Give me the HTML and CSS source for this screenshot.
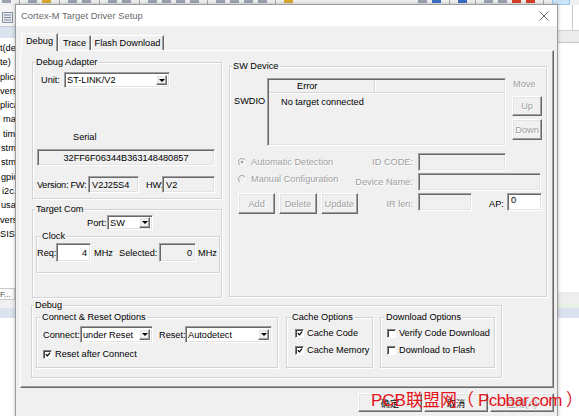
FILE: index.html
```html
<!DOCTYPE html>
<html>
<head>
<meta charset="utf-8">
<title>Cortex-M Target Driver Setup</title>
<link rel="stylesheet" href="styles.css">
</head>
<body>
<div class="ide">
  <div class="toolbar">
    <span class="tb-ic"></span><span class="tb-sep"></span>
    <span class="tb-ic"></span><span class="tb-ic yel"></span><span class="tb-sep"></span>
    <span class="tb-ic"></span><span class="tb-ic"></span><span class="tb-sep"></span>
    <span class="tb-ic"></span><span class="tb-ic"></span><span class="tb-sep"></span>
    <span class="tb-ic"></span><span class="tb-ic"></span><span class="tb-ic"></span><span class="tb-ic"></span><span class="tb-sep"></span>
    <span class="tb-ic"></span><span class="tb-ic"></span><span class="tb-ic"></span><span class="tb-ic"></span><span class="tb-sep"></span>
    <span class="tb-ic yel"></span>
    <span class="tb-fill"></span>
    <span class="tb-ic"></span><span class="tb-ic blu"></span><span class="tb-sep"></span>
    <span class="tb-ic blu"></span><span class="tb-sep"></span>
    <span class="tb-ic"></span><span class="tb-ic"></span><span class="tb-ic red"></span><span class="tb-ic red"></span><span class="tb-sep"></span>
    <span class="tb-hl"></span>
  </div>
  <div class="ide-main">
    <div class="left-pane">
      <div class="lp-tool">
        <svg class="lp-icon" width="11" height="11" viewBox="0 0 11 11"><rect x="0.5" y="0.5" width="10" height="10" fill="#e8eaf0" stroke="#8a93a6"/><path d="M2 3h7M2 5.5h7M2 8h7" stroke="#7b86a0"/></svg>
      </div>
      <div class="lp-head"></div>
      <div class="tree">
        <div class="tl">t(debug)</div>
        <div class="tl">te)</div>
        <div class="tl">plication</div>
        <div class="tl">vers/</div>
        <div class="tl">plication</div>
        <div class="tl in">main.c</div>
        <div class="tl in">timer.c</div>
        <div class="tl in1">stm32f10x</div>
        <div class="tl in1">stm32f10x</div>
        <div class="tl in1">gpio.c</div>
        <div class="tl in2">i2c.c</div>
        <div class="tl in1">usart.c</div>
        <div class="tl">vers/</div>
        <div class="tl">SIS</div>
      </div>
      <div class="lp-tab">F...</div>
      <div class="lp-gap"></div>
      <div class="lp-head2"></div>
      <div class="lp-rest"></div>
    </div>
    <div class="right-pane">
      <div class="rp-top"><span class="rp-line"></span></div>
      <div class="rp-band"></div>
      <div class="rp-white"></div>
      <div class="rp-gray"></div>
      <div class="rp-green"></div>
      <div class="rp-blue"></div>
      <div class="rp-rest"></div>
    </div>
  </div>
</div>

<div class="dialog">
  <div class="titlebar">
    <span class="title">Cortex-M Target Driver Setup</span>
    <svg class="close" width="10" height="10" viewBox="0 0 10 10"><path d="M0.5 0.5L9.5 9.5M9.5 0.5L0.5 9.5" stroke="#6e6e6e" stroke-width="1"/></svg>
  </div>
  <div class="dbody">
    <div class="tabs">
      <div class="tab sel">Debug</div>
      <div class="tab">Trace</div>
      <div class="tab">Flash Download</div>
    </div>
    <div class="panel">
      <div class="cols">
        <div class="lcol">
          <div class="group g-adapter">
            <div class="gt">Debug Adapter</div>
            <div class="unit-row">
              <span class="lbl unit-lbl">Unit:</span>
              <div class="combo sunken unit-combo"><span class="ctext">ST-LINK/V2</span><span class="drop raised"><i class="tri"></i></span></div>
            </div>
            <div class="serial-lbl">Serial</div>
            <div class="field sunken serial">32FF6F06344B363148480857</div>
            <div class="ver-row">
              <span class="lbl ver-lbl">Version: FW:</span>
              <div class="field sunken fw">V2J25S4</div>
              <span class="lbl hw-lbl">HW:</span>
              <div class="field sunken hw">V2</div>
            </div>
          </div>
          <div class="group g-target">
            <div class="gt">Target Com</div>
            <div class="port-row">
              <span class="lbl port-lbl">Port:</span>
              <div class="combo sunken port-combo"><span class="ctext">SW</span><span class="drop raised"><i class="tri"></i></span></div>
            </div>
            <div class="group g-clock">
              <div class="gt gt-in">Clock</div>
              <div class="req-row">
                <span class="lbl req-lbl">Req:</span>
                <div class="field sunken white req">4</div>
                <span class="lbl mhz1">MHz</span>
                <span class="lbl sel-lbl">Selected:</span>
                <div class="field sunken selbox">0</div>
                <span class="lbl mhz2">MHz</span>
              </div>
            </div>
          </div>
        </div>
        <div class="group g-sw">
          <div class="gt">SW Device</div>
          <div class="sw-top">
            <span class="lbl swdio">SWDIO</span>
            <div class="table sunken">
              <div class="thead">
                <div class="th1">Error</div>
                <div class="th2"></div>
              </div>
              <div class="trow">No target connected</div>
            </div>
            <div class="move">
              <span class="dis move-lbl">Move</span>
              <div class="btn raised dis up">Up</div>
              <div class="btn raised dis down">Down</div>
            </div>
          </div>
          <div class="sw-grid">
            <div class="radio dis r1"><svg width="8" height="8" viewBox="0 0 8 8"><path d="M7 2.2A3.5 3.5 0 1 0 2.2 7" fill="none" stroke="#a0a0a0"/><path d="M7 2.2A3.5 3.5 0 0 1 2.2 7" fill="none" stroke="#fff"/><circle cx="4" cy="4" r="1.2" fill="#a0a0a0"/></svg><span>Automatic Detection</span></div>
            <span class="lbl dis glbl">ID CODE:</span>
            <div class="field sunken idcode"></div>

            <div class="radio dis r2"><svg width="8" height="8" viewBox="0 0 8 8"><path d="M7 2.2A3.5 3.5 0 1 0 2.2 7" fill="none" stroke="#a0a0a0"/><path d="M7 2.2A3.5 3.5 0 0 1 2.2 7" fill="none" stroke="#fff"/></svg><span>Manual Configuration</span></div>
            <span class="lbl dis glbl">Device Name:</span>
            <div class="field sunken devname"></div>

            <div class="btnrow">
              <div class="btn raised dis b-add">Add</div>
              <div class="btn raised dis b-del">Delete</div>
              <div class="btn raised dis b-upd">Update</div>
            </div>
            <span class="lbl dis glbl">IR len:</span>
            <div class="ir-cell">
              <div class="field sunken irlen"></div>
              <span class="lbl ap-lbl">AP:</span>
              <div class="field sunken white ap">0</div>
            </div>
          </div>
        </div>
      </div>
      <div class="group g-debug">
        <div class="gt">Debug</div>
        <div class="dg-row">
          <div class="group g-conn">
            <div class="gt gt-in">Connect &amp; Reset Options</div>
            <div class="conn-row">
              <span class="lbl conn-lbl">Connect:</span>
              <div class="combo sunken conn-combo"><span class="ctext">under Reset</span><span class="drop raised"><i class="tri"></i></span></div>
              <span class="lbl reset-lbl">Reset:</span>
              <div class="combo sunken reset-combo"><span class="ctext">Autodetect</span><span class="drop raised"><i class="tri"></i></span></div>
            </div>
            <div class="check c-conn"><span class="cb"><svg width="7" height="7" viewBox="0 0 7 7"><path d="M1 3.2L2.8 5L6 1.4" fill="none" stroke="#000" stroke-width="1.4"/></svg></span><span>Reset after Connect</span></div>
          </div>
          <div class="group g-cache">
            <div class="gt gt-in">Cache Options</div>
            <div class="check c-c1"><span class="cb"><svg width="7" height="7" viewBox="0 0 7 7"><path d="M1 3.2L2.8 5L6 1.4" fill="none" stroke="#000" stroke-width="1.4"/></svg></span><span>Cache Code</span></div>
            <div class="check c-c2"><span class="cb"><svg width="7" height="7" viewBox="0 0 7 7"><path d="M1 3.2L2.8 5L6 1.4" fill="none" stroke="#000" stroke-width="1.4"/></svg></span><span>Cache Memory</span></div>
          </div>
          <div class="group g-dl">
            <div class="gt gt-in">Download Options</div>
            <div class="check c-d1"><span class="cb"></span><span>Verify Code Download</span></div>
            <div class="check c-d2"><span class="cb"></span><span>Download to Flash</span></div>
          </div>
        </div>
      </div>
    </div>
    <div class="buttons">
      <div class="btn raised dbtn">确定</div>
      <div class="btn raised dbtn">取消</div>
      <div class="btn raised dbtn dis">应用(A)</div>
    </div>
  </div>
</div>

<div class="watermark">PCB联盟网（<span class="wm-lat"> Pcbbar.com </span>）</div>
</body>
</html>
```

FILE: styles.css
```css
* { box-sizing: border-box; }
html, body { margin: 0; padding: 0; }
body {
  width: 579px;
  height: 416px;
  overflow: hidden;
  position: relative;
  background: #fff;
  font-family: "Liberation Sans", Arial, "Noto Sans CJK SC", sans-serif;
  font-size: 9.2px;
  color: #000;
}

/* ---------- background IDE ---------- */
.ide { display: flex; flex-direction: column; height: 416px; }
.toolbar {
  height: 5px;
  background: #f0f0f0;
  display: flex;
  align-items: flex-start;
  gap: 5px;
  padding-left: 2px;
  overflow: hidden;
}
.tb-ic { width: 9px; height: 3px; background: #9aa3b0; flex: none; margin-top: 0; }
.tb-ic.yel { background: #d9a830; }
.tb-ic.blu { background: #3d6fc4; }
.tb-ic.red { background: #d8402a; }
.tb-sep { width: 1px; height: 5px; background: #a8a8a8; flex: none; margin: 0 3px; }
.tb-fill { flex: 1; }
.tb-hl { width: 18px; height: 5px; background: #cce4f7; border: 1px solid #99c9ef; border-top: 0; flex: none; margin-right: 9px; }

.ide-main { flex: 1; display: flex; justify-content: space-between; }
.left-pane { width: 15px; display: flex; flex-direction: column; overflow: hidden; }
.lp-tool { height: 21px; background: #f5f5f5; padding: 7px 0 0 2px; }
.lp-icon { display: block; }
.lp-head { height: 12px; background: #dbe3ee; border-top: 1px solid #c5cdd8; }
.tree { height: 250px; background: #fff; padding-top: 3px; white-space: nowrap; }
.tl { height: 14.3px; line-height: 14px; }
.tl.in { padding-left: 3px; }
.tl.in1 { padding-left: 1px; }
.tl.in2 { padding-left: 2px; }
.lp-tab { height: 12px; line-height: 11px; background: #fafafa; border: 1px solid #c8c8c8; border-left: 0; color: #555; font-size: 8px; white-space: nowrap; overflow: hidden; }
.lp-gap { height: 8px; background: #f0f0f0; }
.lp-head2 { height: 10px; background: #dbe3ee; }
.lp-rest { flex: 1; background: #fff; }

.right-pane { width: 22px; display: flex; flex-direction: column; }
.rp-top { height: 25px; background: #fff; display: flex; justify-content: flex-end; padding-right: 6px; }
.rp-line { width: 1px; height: 25px; background: #c8c8c8; }
.rp-band { height: 13px; background: #ececec; border-top: 1px solid #d0d0d0; border-bottom: 1px solid #c4c4c4; }
.rp-white { height: 249px; background: #fff; }
.rp-gray { height: 11px; background: #eeeeee; }
.rp-green { height: 5px; background: #e9f1e4; }
.rp-blue { height: 10px; background: #dbe3ee; }
.rp-rest { flex: 1; background: #fff; }

/* ---------- dialog window ---------- */
.dialog {
  position: absolute;
  left: 15px;
  top: 4px;
  width: 543px;
  height: 420px;
  background: #f0f0f0;
  border: 1px solid #9c9c9c;
  box-shadow: 0 0 4px rgba(0, 0, 0, 0.25);
}
.titlebar {
  height: 21px;
  background: #fff;
  display: flex;
  align-items: center;
  justify-content: space-between;
  padding: 0 8px 0 5px;
}
.title { color: #6a6a6a; font-size: 9.4px; }
.close { display: block; }

.dbody { padding: 7px 3px 0 4px; }

.tabs { display: flex; align-items: flex-end; height: 17px; padding-left: 1px; position: relative; z-index: 1; }
.tab {
  height: 15px;
  line-height: 14px;
  padding: 0 4px;
  border: 1px solid;
  border-bottom: 0;
  border-color: #fff #696969 #696969 #fff;
  box-shadow: inset -1px 0 0 #a0a0a0;
  background: #f0f0f0;
}
.tab.sel { height: 18px; margin-bottom: -1px; line-height: 15px; width: 37px; text-align: center; padding: 0; }
.tab:nth-child(2) { width: 33px; text-align: center; padding: 0; }
.tab:nth-child(3) { width: 73px; text-align: center; padding: 0; }

.panel {
  width: 534px;
  height: 338px;
  border: 1px solid;
  border-color: #fff #696969 #696969 #fff;
  box-shadow: inset -1px -1px 0 #a0a0a0;
  padding: 0 0 0 11px;
}

.cols { display: flex; gap: 7px; }
.lcol { width: 190px; margin-top: 11px; display: flex; flex-direction: column; gap: 10px; }

.group {
  border: 1px solid #d3d3d3;
  box-shadow: inset 1px 1px 0 #fff, 1px 1px 0 #fff;
}
.gt {
  width: fit-content;
  height: 12px;
  line-height: 12px;
  margin: -7px 0 0 2px;
  padding: 0 1px;
  background: #f0f0f0;
  white-space: nowrap;
}
.gt-in { margin-left: 4px; }

.lbl { white-space: nowrap; line-height: 12px; flex: none; }
.dis { color: #a0a0a0; text-shadow: 1px 1px 0 #fff; }

.sunken {
  border: 1px solid;
  border-color: #a0a0a0 #fff #fff #a0a0a0;
  box-shadow: inset 1px 1px 0 #696969, inset -1px -1px 0 #e3e3e3;
}
.raised {
  border: 1px solid;
  border-color: #fff #696969 #696969 #fff;
  box-shadow: inset -1px -1px 0 #a0a0a0, inset 1px 1px 0 #e3e3e3;
  background: #f0f0f0;
}

.combo { display: flex; background: #fff; padding: 2px 2px 2px 0; flex: none; }
.ctext { flex: 1; padding-left: 2px; display: flex; align-items: center; white-space: nowrap; overflow: hidden; }
.drop { width: 11px; display: flex; align-items: center; justify-content: center; }
.tri { width: 0; height: 0; border-left: 3px solid transparent; border-right: 3px solid transparent; border-top: 3px solid #000; }

.field { display: flex; align-items: center; padding: 0 3px; flex: none; white-space: nowrap; }
.field.white { background: #fff; }

/* Debug Adapter */
.g-adapter { height: 137px; }
.unit-row { display: flex; align-items: center; height: 16px; margin-top: 4px; padding-left: 8px; }
.unit-lbl { width: 23px; }
.unit-combo { width: 106px; height: 16px; }
.serial-lbl { margin: 43px 0 0 40px; height: 12px; line-height: 12px; }
.serial { margin: 6px 0 0 4px; width: 178px; height: 17px; justify-content: center; }
.ver-row { display: flex; align-items: center; height: 17px; margin-top: 10px; padding-left: 4px; }
.ver-lbl { width: 51px; letter-spacing: -0.25px; }
.fw { width: 51px; height: 17px; }
.hw-lbl { width: 16px; margin-left: 7px; letter-spacing: -0.2px; }
.hw { width: 53px; height: 17px; }

/* Target Com */
.g-target { height: 89px; }
.port-row { display: flex; align-items: center; height: 15px; padding-left: 54px; }
.port-lbl { width: 20px; }
.port-combo { width: 46px; height: 15px; padding-top: 1px; padding-bottom: 1px; }
.g-clock { width: 184px; height: 37px; margin: 6px 0 0 3px; }
.req-row { display: flex; align-items: center; height: 19px; margin-top: 1px; }
.req-lbl { width: 19px; }
.req { width: 35px; height: 19px; justify-content: flex-end; }
.mhz1 { width: 25px; margin-left: 3px; }
.sel-lbl { width: 40px; }
.selbox { width: 37px; height: 19px; justify-content: flex-end; }
.mhz2 { margin-left: 2px; }

/* SW Device */
.g-sw { width: 318px; height: 231px; margin-top: 15px; }
.sw-top { display: flex; height: 68px; margin-top: 6px; }
.swdio { width: 37px; padding-left: 4px; margin-top: 17px; }
.table { width: 239px; height: 68px; background: #f0f0f0; padding: 1px 0 0 1px; }
.thead { display: flex; height: 13px; border-bottom: 1px solid #d5d5d5; box-shadow: 0 1px 0 #fff; }
.th1 { width: 106px; line-height: 12px; padding-left: 28px; border-right: 1px solid #d5d5d5; box-shadow: 1px 0 0 #fff; }
.th2 { flex: 1; }
.trow { margin-top: 2px; line-height: 14px; padding-left: 12px; }
.move { width: 30px; margin-left: 6px; display: flex; flex-direction: column; }
.move-lbl { line-height: 12px; height: 12px; padding-left: 1px; }
.btn { display: flex; align-items: center; justify-content: center; white-space: nowrap; }
.up { height: 20px; margin-top: 6px; }
.down { height: 21px; margin-top: 3px; }

.sw-grid {
  display: grid;
  grid-template-columns: 120px 60px 1fr;
  grid-template-rows: 18px 18px 21px;
  row-gap: 2px;
  margin: 7px 0 0 8px;
}
.radio { display: flex; align-items: center; gap: 5px; white-space: nowrap; }
.radio svg { display: block; flex: none; }
.r2 { align-self: start; height: 12px; }
.glbl { justify-self: end; align-self: center; padding-right: 5px; }
.idcode { width: 88px; height: 18px; }
.devname { width: 123px; height: 18px; }
.btnrow { display: flex; gap: 4px; }
.b-add, .b-del, .b-upd { width: 40px; height: 21px; }
.ir-cell { display: flex; align-items: flex-start; }
.irlen { width: 54px; height: 18px; }
.ap-lbl { width: 18px; margin-left: 17px; align-self: center; }
.ap { width: 35px; height: 18px; align-items: flex-start; padding-top: 1px; }

/* Debug group */
.g-debug { width: 471px; height: 73px; margin: 7px 0 0 -1px; }
.dg-row { display: flex; margin-top: 6px; padding-left: 4px; }
.g-conn { width: 242px; height: 51px; }
.conn-row { display: flex; align-items: center; height: 17px; margin-top: 3px; padding-left: 6px; }
.conn-lbl { width: 37px; }
.conn-combo { width: 73px; height: 17px; }
.reset-lbl { width: 26px; margin-left: 6px; }
.reset-combo { width: 87px; height: 17px; }
.check { display: flex; align-items: center; gap: 3px; height: 12px; white-space: nowrap; overflow: hidden; }
.cb {
  width: 9px;
  height: 9px;
  flex: none;
  background: #fff;
  border: 1px solid;
  border-color: #808080 #fff #fff #808080;
  box-shadow: inset 1px 1px 0 #404040;
  display: flex;
  align-items: center;
  justify-content: center;
  padding: 1px 0 0 1px;
}
.cb svg { display: block; }
.c-conn { margin-top: 5px; padding-left: 6px; }
.g-cache { width: 87px; height: 51px; margin-left: 8px; }
.c-c1 { margin-top: 4px; padding-left: 8px; }
.c-c2 { margin-top: 5px; padding-left: 8px; }
.g-dl { width: 115px; height: 51px; margin-left: 7px; }
.c-d1 { margin-top: 4px; padding-left: 6px; width: 112px; }
.c-d2 { margin-top: 5px; padding-left: 6px; }

/* bottom buttons */
.buttons { display: flex; justify-content: flex-end; gap: 2px; margin-top: 5px; padding-right: 0; }
.dbtn { width: 64px; height: 19px; font-family: "Liberation Sans", "Noto Sans CJK SC", sans-serif; }

/* watermark overlay */
.watermark {
  position: absolute;
  left: 371px;
  top: 390px;
  font-family: "Liberation Sans", "Noto Sans CJK SC", sans-serif;
  font-size: 17px;
  line-height: 22px;
  color: #e3141b;
  white-space: nowrap;
}
.wm-lat { letter-spacing: -0.6px; }
```
